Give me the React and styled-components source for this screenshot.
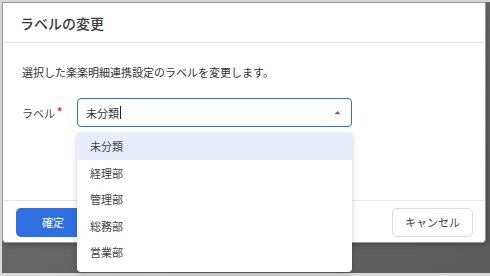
import React from "react";
import styled, { createGlobalStyle } from "styled-components";

const GlobalStyle = createGlobalStyle`
  html, body {
    margin: 0;
    padding: 0;
    background: #d9d9d9;
    font-family: "Noto Sans CJK JP", "Noto Sans", sans-serif;
    color: #333;
  }
  * { box-sizing: border-box; }
`;

const options = ["未分類", "経理部", "管理部", "総務部", "営業部"];

export default function App() {
  return (
    <>
      <GlobalStyle />
      <Screen>
        <Backdrop>
          <Dialog>
            <Header>
              <Title>ラベルの変更</Title>
            </Header>
            <Body>
              <Description>選択した楽楽明細連携設定のラベルを変更します。</Description>
              <FormRow>
                <Label>
                  ラベル<Required>*</Required>
                </Label>
                <SelectWrap>
                  <SelectBox>
                    <Value>
                      未分類<Caret />
                    </Value>
                    <Arrow viewBox="0 0 8 5" aria-hidden="true">
                      <path d="M0.5 4.5 L4 0.8 L7.5 4.5 Z" fill="#6b6b6b" />
                    </Arrow>
                  </SelectBox>
                  <Menu>
                    {options.map((o, i) => (
                      <Option key={o} $active={i === 0}>
                        {o}
                      </Option>
                    ))}
                  </Menu>
                </SelectWrap>
              </FormRow>
            </Body>
            <Footer>
              <PrimaryButton>確定</PrimaryButton>
              <SecondaryButton>キャンセル</SecondaryButton>
            </Footer>
          </Dialog>
        </Backdrop>
      </Screen>
    </>
  );
}

const Screen = styled.div`
  width: 490px;
  height: 276px;
  padding: 2px 0 0 2px;
`;

const Backdrop = styled.div`
  height: 271px;
  background: linear-gradient(160deg, #767676 0%, #666 55%, #5c5c5c 100%);
`;

const Dialog = styled.div`
  width: 484px;
  height: 241px;
  background: #fff;
  border: 1px solid #9a9a9a;
  border-radius: 0 0 4px 4px;
  box-shadow: 2px 2px 4px rgba(0, 0, 0, 0.25);
  display: flex;
  flex-direction: column;
`;

const Header = styled.div`
  height: 40px;
  padding: 0 17px;
  display: flex;
  align-items: center;
  border-bottom: 1px solid #e6e6e6;
`;

const Title = styled.h2`
  margin: 0;
  font-size: 14px;
  font-weight: 500;
  color: #3a3a3a;
`;

const Body = styled.div`
  flex: 1;
  padding: 21px 19px 0;
`;

const Description = styled.p`
  margin: 0;
  font-size: 11px;
  line-height: 16px;
  color: #333;
`;

const FormRow = styled.div`
  margin-top: 18px;
  display: flex;
  align-items: center;
`;

const Label = styled.div`
  width: 55px;
  font-size: 11px;
  color: #444;
`;

const Required = styled.span`
  color: #e0312b;
  margin-left: 2px;
  font-size: 11px;
  font-weight: 700;
  position: relative;
  top: -2px;
`;

const SelectWrap = styled.div`
  position: relative;
  width: 275px;
`;

const SelectBox = styled.div`
  height: 29px;
  border: 1.5px solid #2f6fdc;
  border-radius: 4px;
  padding: 0 10px 0 8px;
  display: flex;
  align-items: center;
  justify-content: space-between;
`;

const Value = styled.span`
  font-size: 11px;
  color: #333;
  display: flex;
  align-items: center;
`;

const Caret = styled.span`
  display: inline-block;
  width: 0;
  height: 13px;
  border-left: 1px solid #222;
  margin-left: 1px;
`;

const Arrow = styled.svg`
  width: 7px;
  height: 5px;
`;

const Menu = styled.ul`
  position: absolute;
  top: 35px;
  left: 0;
  width: 100%;
  margin: 0;
  padding: 0 0 6px;
  list-style: none;
  background: #fff;
  border-radius: 0 0 4px 4px;
  box-shadow: 0 2px 6px rgba(0, 0, 0, 0.18);
  z-index: 10;
`;

const Option = styled.li`
  height: 26.5px;
  padding-left: 13px;
  display: flex;
  align-items: center;
  font-size: 11px;
  color: #444;
  background: ${(p) => (p.$active ? "#e7edfa" : "transparent")};
`;

const Footer = styled.div`
  height: 42px;
  border-top: 1px solid #e6e6e6;
  padding: 0 12px 0 13px;
  display: flex;
  align-items: center;
  justify-content: space-between;
`;

const PrimaryButton = styled.button`
  width: 74px;
  height: 29px;
  border: none;
  border-radius: 5px;
  background: #2f6fe0;
  color: #fff;
  font-family: inherit;
  font-size: 11px;
  margin-top: 1px;
`;

const SecondaryButton = styled.button`
  width: 81px;
  height: 29px;
  border: 1px solid #dcdcdc;
  border-radius: 5px;
  background: #fff;
  color: #444;
  font-family: inherit;
  font-size: 11px;
  margin-top: 1px;
`;
